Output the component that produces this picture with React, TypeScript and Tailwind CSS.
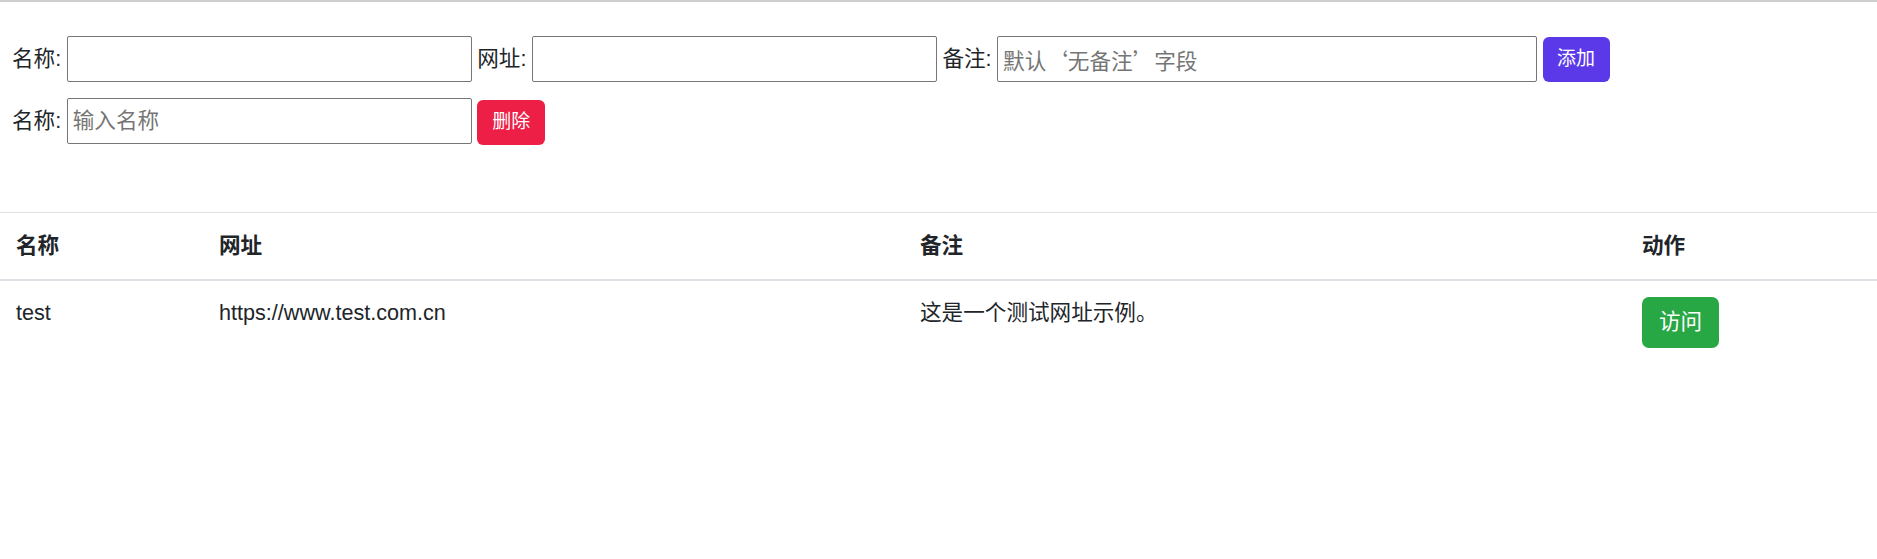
import React from "react";

const font = {
  fontFamily: '"Liberation Sans", "Noto Sans CJK SC", sans-serif',
};

const cjkFirst = {
  fontFamily: '"Noto Sans CJK SC", "Liberation Sans", sans-serif',
};

const rows = [
  { name: "test", url: "https://www.test.com.cn", note: "这是一个测试网址示例。" },
];

export default function App() {
  return (
    <div className="min-h-[559px] bg-white text-[#212529] text-[21.6px]" style={font}>
      <div className="h-[2px] bg-[#cfcfcf]" />

      <form className="pl-[12px] pt-[34px] flex flex-col gap-[16px]" onSubmit={(e) => e.preventDefault()}>
        <div className="flex items-center gap-[5.5px] h-[46px]">
          <label className="whitespace-nowrap">名称:</label>
          <input className="w-[405px] h-[46px] border border-[#767676] rounded-[2px] px-[5px] outline-none" />
          <label className="whitespace-nowrap">网址:</label>
          <input className="w-[405px] h-[46px] border border-[#767676] rounded-[2px] px-[5px] outline-none" />
          <label className="whitespace-nowrap">备注:</label>
          <input
            className="w-[540px] h-[46px] border border-[#767676] rounded-[2px] px-[5px] outline-none placeholder:text-[#757575]"
            style={cjkFirst}
            placeholder="默认‘无备注’字段"
          />
          <button className="w-[67px] h-[45px] rounded-[6px] bg-[#5b39e8] text-white text-[19px]">
            添加
          </button>
        </div>
        <div className="flex items-center gap-[5.5px] h-[46px]">
          <label className="whitespace-nowrap">名称:</label>
          <input
            className="w-[405px] h-[46px] border border-[#767676] rounded-[2px] px-[5px] outline-none placeholder:text-[#757575]"
            placeholder="输入名称"
          />
          <button className="mt-[2px] w-[68px] h-[45px] rounded-[6px] bg-[#ed1f47] text-white text-[19px]">
            删除
          </button>
        </div>
      </form>

      <table className="mt-[68px] w-full table-fixed border-collapse text-left">
        <colgroup>
          <col className="w-[203px]" />
          <col className="w-[701px]" />
          <col className="w-[722px]" />
          <col />
        </colgroup>
        <thead>
          <tr className="border-t border-[#dee2e6] border-b-2 border-b-[#dcdfe3]">
            <th className="px-[16px] py-[17px] leading-[32px] font-bold">名称</th>
            <th className="px-[16px] py-[17px] leading-[32px] font-bold">网址</th>
            <th className="px-[16px] py-[17px] leading-[32px] font-bold">备注</th>
            <th className="px-[16px] py-[17px] leading-[32px] font-bold">动作</th>
          </tr>
        </thead>
        <tbody>
          {rows.map((r) => (
            <tr key={r.name}>
              <td className="px-[16px] py-[16px] align-top leading-[32px]">{r.name}</td>
              <td className="px-[16px] py-[16px] align-top leading-[32px]">{r.url}</td>
              <td className="px-[16px] py-[16px] align-top leading-[32px]">{r.note}</td>
              <td className="px-[16px] py-[16px] align-top">
                <button className="w-[77px] h-[51px] rounded-[7px] bg-[#28a745] text-white text-[21.6px]">
                  访问
                </button>
              </td>
            </tr>
          ))}
        </tbody>
      </table>
    </div>
  );
}
